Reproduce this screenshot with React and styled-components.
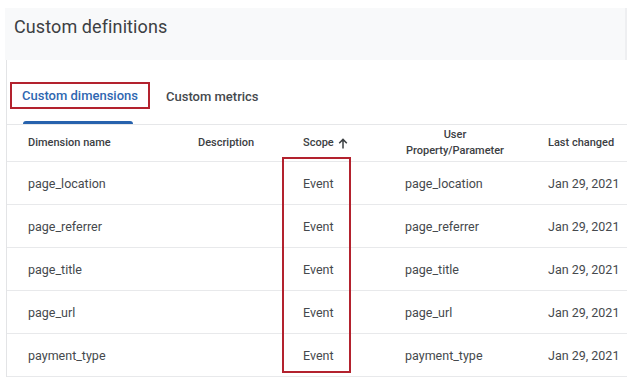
import React from "react";
import styled, { createGlobalStyle } from "styled-components";

const GlobalStyle = createGlobalStyle`
  body {
    margin: 0;
    background: #ffffff;
    font-family: Roboto, "Liberation Sans", Arial, sans-serif;
    color: #3c4043;
  }
`;

const Page = styled.div`
  width: 630px;
  height: 386px;
  overflow: hidden;
  padding-top: 8px;
  box-sizing: border-box;
`;

const TitleBar = styled.div`
  margin: 0 3px 0 5px;
  height: 52px;
  background: #f8f9fa;
  border-right: 2px solid #eeeff1;
  display: flex;
  align-items: center;
  padding-left: 9px;
  padding-bottom: 16px;
  box-sizing: border-box;
`;

const Title = styled.h1`
  margin: 0;
  font-size: 18px;
  font-weight: 400;
  color: #3c4043;
  letter-spacing: 0.1px;
`;

const Card = styled.div`
  margin-left: 6px;
  width: 620px;
  border-left: 1px solid #e3e4e6;
  background: #fff;
`;

const Tabs = styled.div`
  height: 65px;
  display: flex;
  gap: 4px;
  padding-left: 3px;
  border-bottom: 1px solid #e6e7e9;
  box-sizing: border-box;
`;

const Tab = styled.div`
  display: flex;
  flex-direction: column;
  padding-top: 22px;
`;

const TabLabel = styled.div`
  height: 28px;
  box-sizing: border-box;
  padding: 0 10px;
  border: 2px solid ${(p) => (p.$marked ? "#b3222e" : "transparent")};
  display: flex;
  align-items: center;
  font-size: 13px;
  font-weight: 500;
  color: ${(p) => (p.$active ? "#2f67b1" : "#45494d")};
  white-space: nowrap;
`;

const Indicator = styled.div`
  margin: 12px 0 0 13px;
  width: 110px;
  height: 3px;
  border-radius: 3px 3px 0 0;
  background: #2762ad;
`;

const Table = styled.div`
  position: relative;
`;

const Row = styled.div`
  display: grid;
  grid-template-columns: 184px 91px 69px 189px 1fr;
  height: ${(p) => (p.$head ? "37px" : "43px")};
  align-items: center;
  border-bottom: 1px solid #e8e9eb;
  box-sizing: border-box;
`;

const Cell = styled.div`
  padding-left: ${(p) => p.$pad}px;
  font-size: 12.5px;
  color: #45494d;
  white-space: nowrap;
`;

const HeadCell = styled.div`
  padding-left: ${(p) => p.$pad}px;
  font-size: 11px;
  font-weight: 500;
  color: #3c4043;
  line-height: 16px;
  text-align: ${(p) => (p.$center ? "center" : "left")};
  display: flex;
  align-items: center;
  justify-content: ${(p) => (p.$center ? "center" : "flex-start")};
  gap: 4px;
`;

const Highlight = styled.div`
  position: absolute;
  left: 275px;
  top: 32px;
  width: 69px;
  height: 216px;
  border: 2px solid #b3222e;
  box-sizing: border-box;
  pointer-events: none;
`;

const rows = [
  "page_location",
  "page_referrer",
  "page_title",
  "page_url",
  "payment_type",
];

const ArrowUp = () => (
  <svg width="10" height="11" viewBox="0 0 10 11" fill="none">
    <path d="M5 10.5V1.5M1.2 5.2L5 1.4l3.8 3.8" stroke="#3c4043" strokeWidth="1.5" />
  </svg>
);

export default function App() {
  return (
    <Page>
      <GlobalStyle />
      <TitleBar>
        <Title>Custom definitions</Title>
      </TitleBar>
      <Card>
        <Tabs>
          <Tab>
            <TabLabel $active $marked>Custom dimensions</TabLabel>
            <Indicator />
          </Tab>
          <Tab>
            <TabLabel>Custom metrics</TabLabel>
          </Tab>
        </Tabs>
        <Table>
          <Row $head>
            <HeadCell $pad={21}>Dimension name</HeadCell>
            <HeadCell $pad={7}>Description</HeadCell>
            <HeadCell $pad={21}>
              Scope <ArrowUp />
            </HeadCell>
            <HeadCell $pad={19} $center>
              User
              <br />
              Property/Parameter
            </HeadCell>
            <HeadCell $pad={8}>Last changed</HeadCell>
          </Row>
          {rows.map((name) => (
            <Row key={name}>
              <Cell $pad={21}>{name}</Cell>
              <Cell $pad={7}></Cell>
              <Cell $pad={21}>Event</Cell>
              <Cell $pad={54}>{name}</Cell>
              <Cell $pad={8}>Jan 29, 2021</Cell>
            </Row>
          ))}
          <Highlight />
        </Table>
      </Card>
    </Page>
  );
}
